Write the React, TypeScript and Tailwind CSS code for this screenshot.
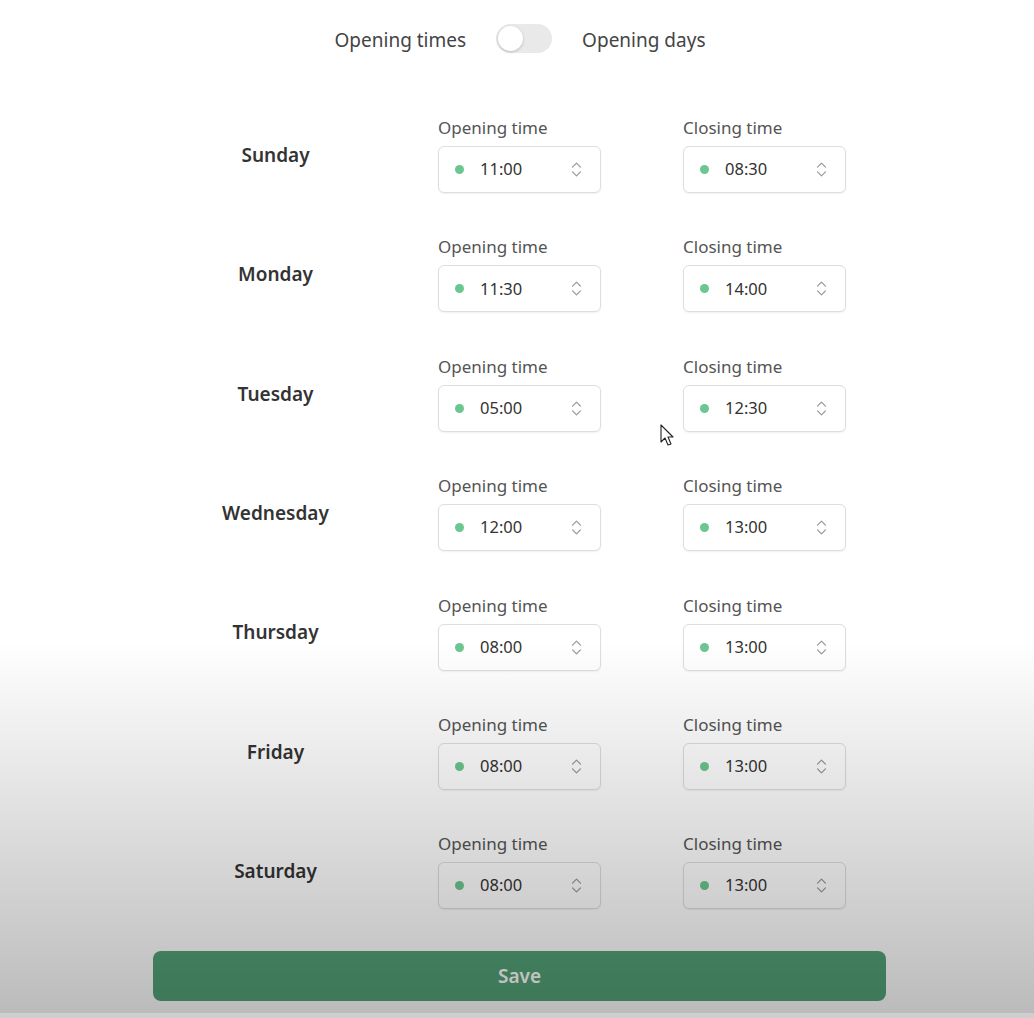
import { ChevronsUpDown } from "lucide-react"

const days = [
  { day: "Sunday", open: "11:00", close: "08:30" },
  { day: "Monday", open: "11:30", close: "14:00" },
  { day: "Tuesday", open: "05:00", close: "12:30" },
  { day: "Wednesday", open: "12:00", close: "13:00" },
  { day: "Thursday", open: "08:00", close: "13:00" },
  { day: "Friday", open: "08:00", close: "13:00" },
  { day: "Saturday", open: "08:00", close: "13:00" },
]

function TimeField({ label, value }: { label: string; value: string }) {
  return (
    <div className="flex flex-col">
      <span className="text-[17px] leading-[22px] text-[#555] mb-[7px]">{label}</span>
      <div className="h-[47px] w-[163px] rounded-md border border-[#dedede] bg-white shadow-[0_1px_2px_rgba(0,0,0,0.06)] flex items-center pl-[16px] pr-[14px]">
        <span className="w-[9px] h-[9px] rounded-full bg-[#6cc690]" />
        <span className="ml-[16px] text-[16.5px] text-[#333]">{value}</span>
        <ChevronsUpDown className="ml-auto w-[19px] h-[19px] text-[#9a9a9a]" strokeWidth={1.6} />
      </div>
    </div>
  )
}

export default function App() {
  return (
    <div
      className="relative h-[1018px] w-full overflow-hidden bg-white"
      style={{ fontFamily: '"Noto Sans", "Open Sans", sans-serif' }}
    >
      {/* toggle */}
      <div className="flex items-center justify-center pt-[24px] pl-[6px]">
        <span className="translate-y-[2px] text-[19px] text-[#444]">Opening times</span>
        <div className="mx-[30px] w-[56px] h-[29px] rounded-full bg-[#e9e9e9] flex items-center px-[2px]">
          <div className="w-[25px] h-[25px] rounded-full bg-white shadow-[0_1px_3px_rgba(0,0,0,0.2)]" />
        </div>
        <span className="translate-y-[2px] text-[19px] text-[#444]">Opening days</span>
      </div>

      {/* days */}
      <div className="pl-[153px] pt-[64px]">
        <div className="pl-[42px] flex flex-col gap-y-[43.4px]">
          {days.map((d) => (
            <div key={d.day} className="grid grid-cols-[161px_163px_163px] gap-x-[82px] items-center">
              <div className="text-center text-[19px] font-semibold text-[#333]">{d.day}</div>
              <TimeField label="Opening time" value={d.open} />
              <TimeField label="Closing time" value={d.close} />
            </div>
          ))}
        </div>
        <button className="mt-[42px] w-[733px] h-[50px] rounded-lg bg-[#53a277] text-white text-[19px] font-semibold">
          Save
        </button>
      </div>

      {/* fade overlay */}
      <div className="pointer-events-none absolute inset-0 bg-gradient-to-b from-transparent from-[63%] to-black/[0.27]" />
      <div className="pointer-events-none absolute bottom-0 left-0 right-0 h-[5px] bg-[#cfcfcf]" />

      {/* cursor */}
      <svg className="absolute left-[660px] top-[424px]" width="16" height="24" viewBox="0 0 16 24">
        <path d="M1 1 L1 18 L5 14 L8 21 L11 20 L8 13 L13 13 Z" fill="white" stroke="#222" strokeWidth="1.1" strokeLinejoin="round" />
      </svg>
    </div>
  )
}
